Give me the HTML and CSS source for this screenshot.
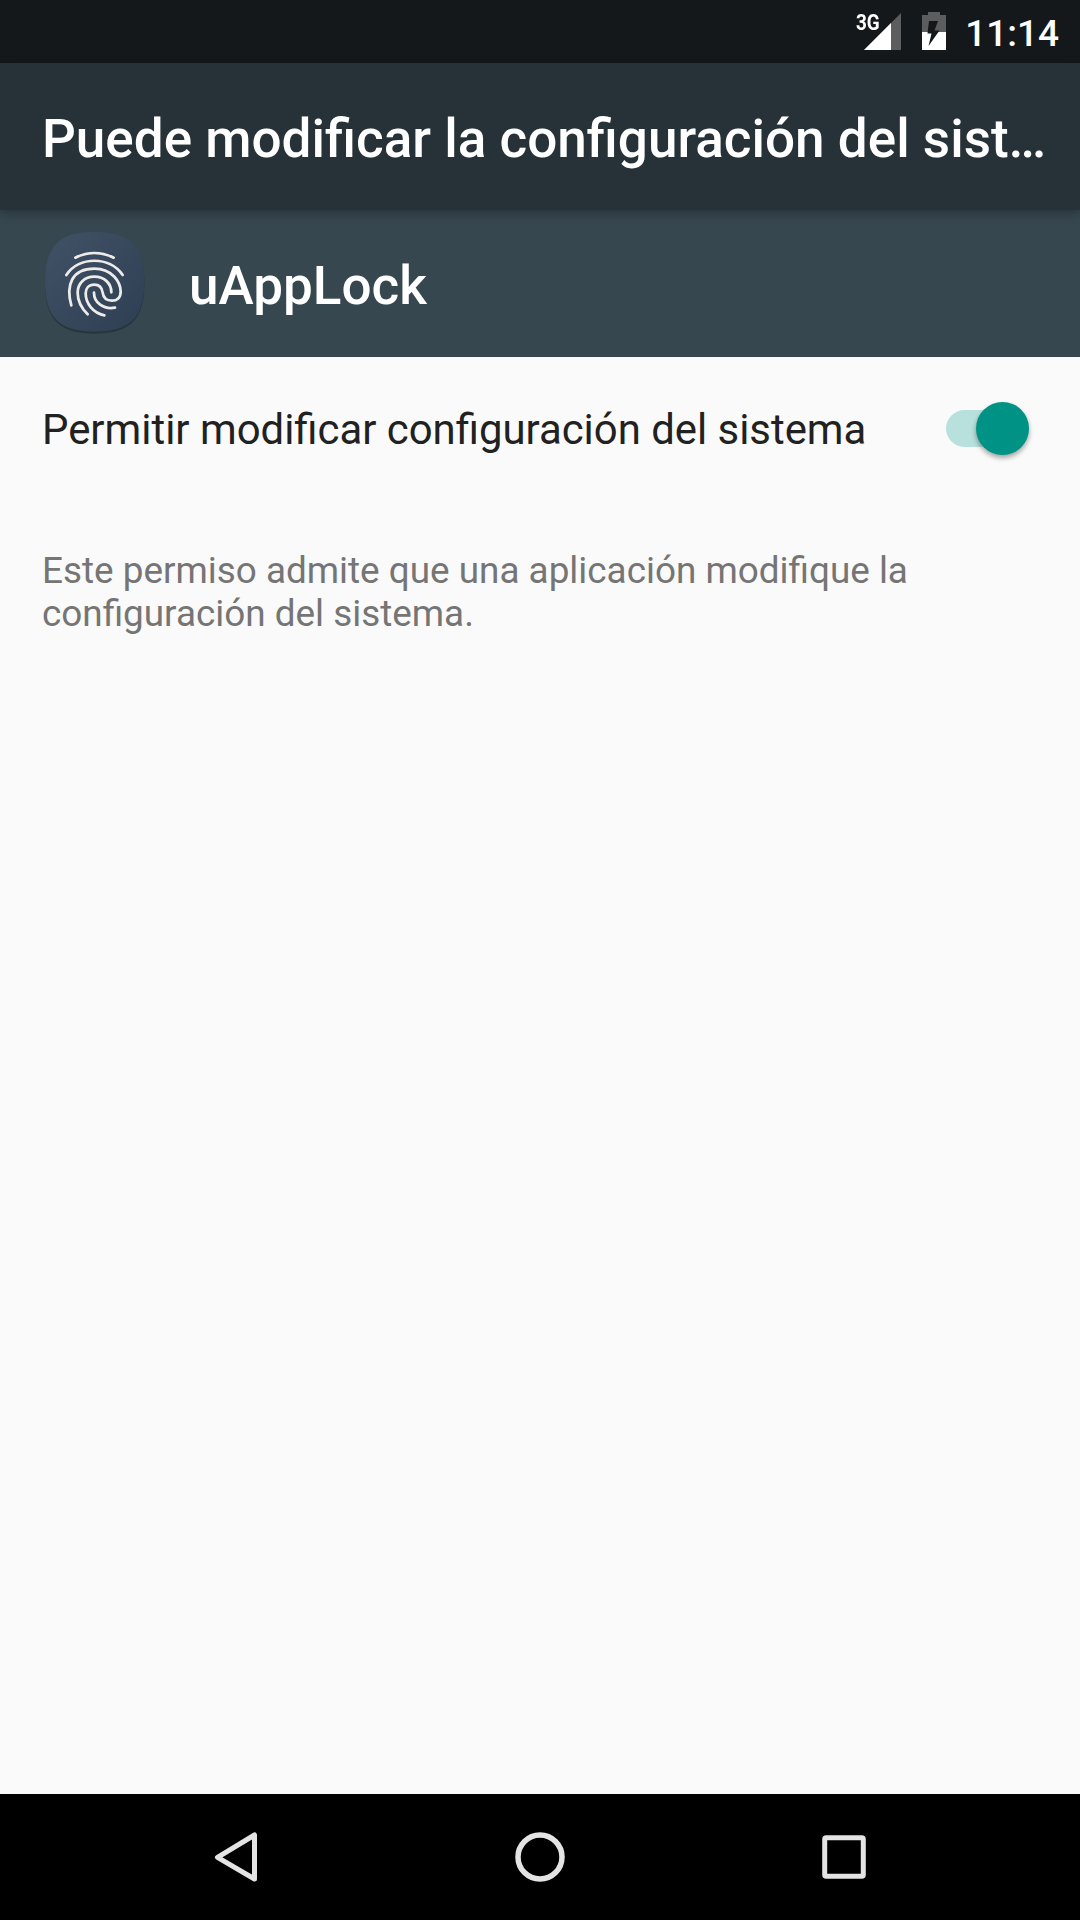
FILE: index.html
```html
<!DOCTYPE html>
<html lang="es">
<head>
<meta charset="utf-8">
<title>uAppLock</title>
<link rel="stylesheet" href="styles.css">
</head>
<body>
<div class="screen">
  <div class="status-bar">
    <div class="signal">
      <span class="network">3G</span>
      <svg class="signal-icon" width="37" height="37" viewBox="0 0 37 37">
        <path d="M37 0V37H0Z" fill="#5b5d5f"/>
        <path d="M27 10V37H0Z" fill="#fff"/>
      </svg>
    </div>
    <svg class="battery-icon" width="24" height="38" viewBox="0 0 24 38">
      <path d="M6 0H18V3H24V20H0V3H6Z" fill="#5b5d5f"/>
      <path d="M0 20H24V38H0Z" fill="#fff"/>
      <path d="M7 9H16L12.500 18.500H17.500L6.500 34L9.500 21.500H5.500Z" fill="#14181b"/>
    </svg>
    <span class="clock">11:14</span>
  </div>
  <header class="app-bar"><h1 class="title">Puede modificar la configuración del sist…</h1></header>
  <section class="app-header">
    <svg class="app-icon" width="116" height="112" viewBox="0 0 348 336">
      <defs>
        <linearGradient id="tile" x1="0" y1="0" x2="1" y2="1">
          <stop offset="0" stop-color="#415266"/>
          <stop offset="1" stop-color="#2e3e53"/>
        </linearGradient>
      </defs>
      <path class="tile" d="M176 18C280 18 325 58 325 167C325 277 280 317 176 317C72 317 27 277 27 167C27 58 72 18 176 18Z" fill="url(#tile)"/>
      <g class="ridges">
        <path d="M118 95Q175 67 233 95"/>
        <path d="M91 147C130 90 220 90 260 147"/>
        <path d="M106 238C89 178 107 128 175 128C230 128 254 170 254 197C254 215 243 224 228 224C212 224 202 215 200 200C198 185 190 176 175 176C158 176 149 188 149 202C149 232 170 260 205 268"/>
        <path d="M155 265C135 245 125 225 125 200C125 172 145 152 175 152C205 152 226 172 226 199"/>
        <path d="M174 200C174 230 202 251 237 245"/>
      </g>
    </svg>
    <h2 class="app-name">uAppLock</h2>
  </section>
  <main class="content">
    <div class="setting">
      <span class="setting-label">Permitir modificar configuración del sistema</span>
      <div class="switch"><div class="thumb"></div></div>
    </div>
    <p class="summary">Este permiso admite que una aplicación modifique la configuración del sistema.</p>
  </main>
  <nav class="nav-bar">
    <svg width="60" height="60" viewBox="0 0 60 60"><path d="M48.500 8V52L11.500 30.300Z"/></svg>
    <svg width="60" height="60" viewBox="0 0 60 60"><circle cx="30" cy="30" r="22" stroke-width="5.500"/></svg>
    <svg width="60" height="60" viewBox="0 0 60 60"><rect x="10.700" y="10.700" width="38.600" height="38.600" rx="1.500"/></svg>
  </nav>
</div>
</body>
</html>
```
FILE: styles.css
```css
* { box-sizing: border-box; }

body {
  margin: 0;
  font-family: Roboto, sans-serif;
  background: #fafafa;
}

.screen {
  width: 1080px;
  height: 1920px;
  display: flex;
  flex-direction: column;
  overflow: hidden;
}

.status-bar {
  height: 63px;
  flex: none;
  display: flex;
  justify-content: flex-end;
  align-items: flex-start;
  padding-right: 21px;
  background: #14181b;
  color: #fff;
}

.signal {
  position: relative;
  width: 45px;
  height: 50px;
  margin-right: 21.5px;
  display: flex;
  justify-content: flex-end;
  align-items: flex-end;
}

.network {
  position: absolute;
  left: 0;
  top: 12px;
  font: 700 21.5px/21px Roboto, sans-serif;
  transform: scaleX(.88);
  transform-origin: left;
}

.battery-icon { margin-top: 12px; }

.clock {
  margin-left: 19px;
  font-size: 37px;
  font-weight: 500;
  line-height: 68px;
}

.app-bar {
  position: relative;
  z-index: 1;
  height: 147px;
  flex: none;
  display: flex;
  align-items: center;
  padding: 5px 20px 0 42px;
  background: #263238;
  box-shadow: 0 3px 10px rgba(0, 0, 0, .3);
}

.title,
.app-name {
  margin: 0;
  color: #fff;
  font-size: 53.05px;
  font-weight: 500;
  line-height: 62px;
  white-space: nowrap;
}

.app-header {
  height: 147px;
  flex: none;
  display: flex;
  align-items: center;
  padding-left: 36px;
  background: #37474f;
}

.app-icon { margin-bottom: 3px; }

.tile { filter: drop-shadow(0 5px 2px rgba(0, 0, 0, .3)); }

.ridges {
  fill: none;
  stroke: #eeecea;
  stroke-width: 8.2;
  stroke-linecap: round;
}

.app-name {
  margin-left: 37px;
  padding-top: 5px;
}

.content {
  flex: 1;
  background: #fafafa;
}

.setting {
  height: 147px;
  display: flex;
  align-items: center;
  justify-content: space-between;
  padding: 0 51px 0 42px;
}

.setting-label {
  margin-bottom: 2px;
  color: #212121;
  font-size: 41.88px;
  line-height: 50px;
}

.switch {
  width: 83px;
  height: 37px;
  margin-bottom: 5px;
  display: flex;
  justify-content: flex-end;
  align-items: center;
  border-radius: 19px;
  background: #b8e0dc;
}

.thumb {
  width: 53px;
  height: 53px;
  flex: none;
  border-radius: 50%;
  background: #009385;
  box-shadow: 0 3px 5px rgba(0, 0, 0, .35);
}

.summary {
  margin: 45px 42px 0;
  width: 940px;
  color: #757575;
  font-size: 36.87px;
  line-height: 43px;
}

.nav-bar {
  height: 126px;
  flex: none;
  display: flex;
  justify-content: center;
  align-items: center;
  gap: 244px;
  background: #000;
}

.nav-bar svg {
  fill: none;
  stroke: #e4e4e4;
  stroke-width: 5;
  stroke-linejoin: round;
}
```
